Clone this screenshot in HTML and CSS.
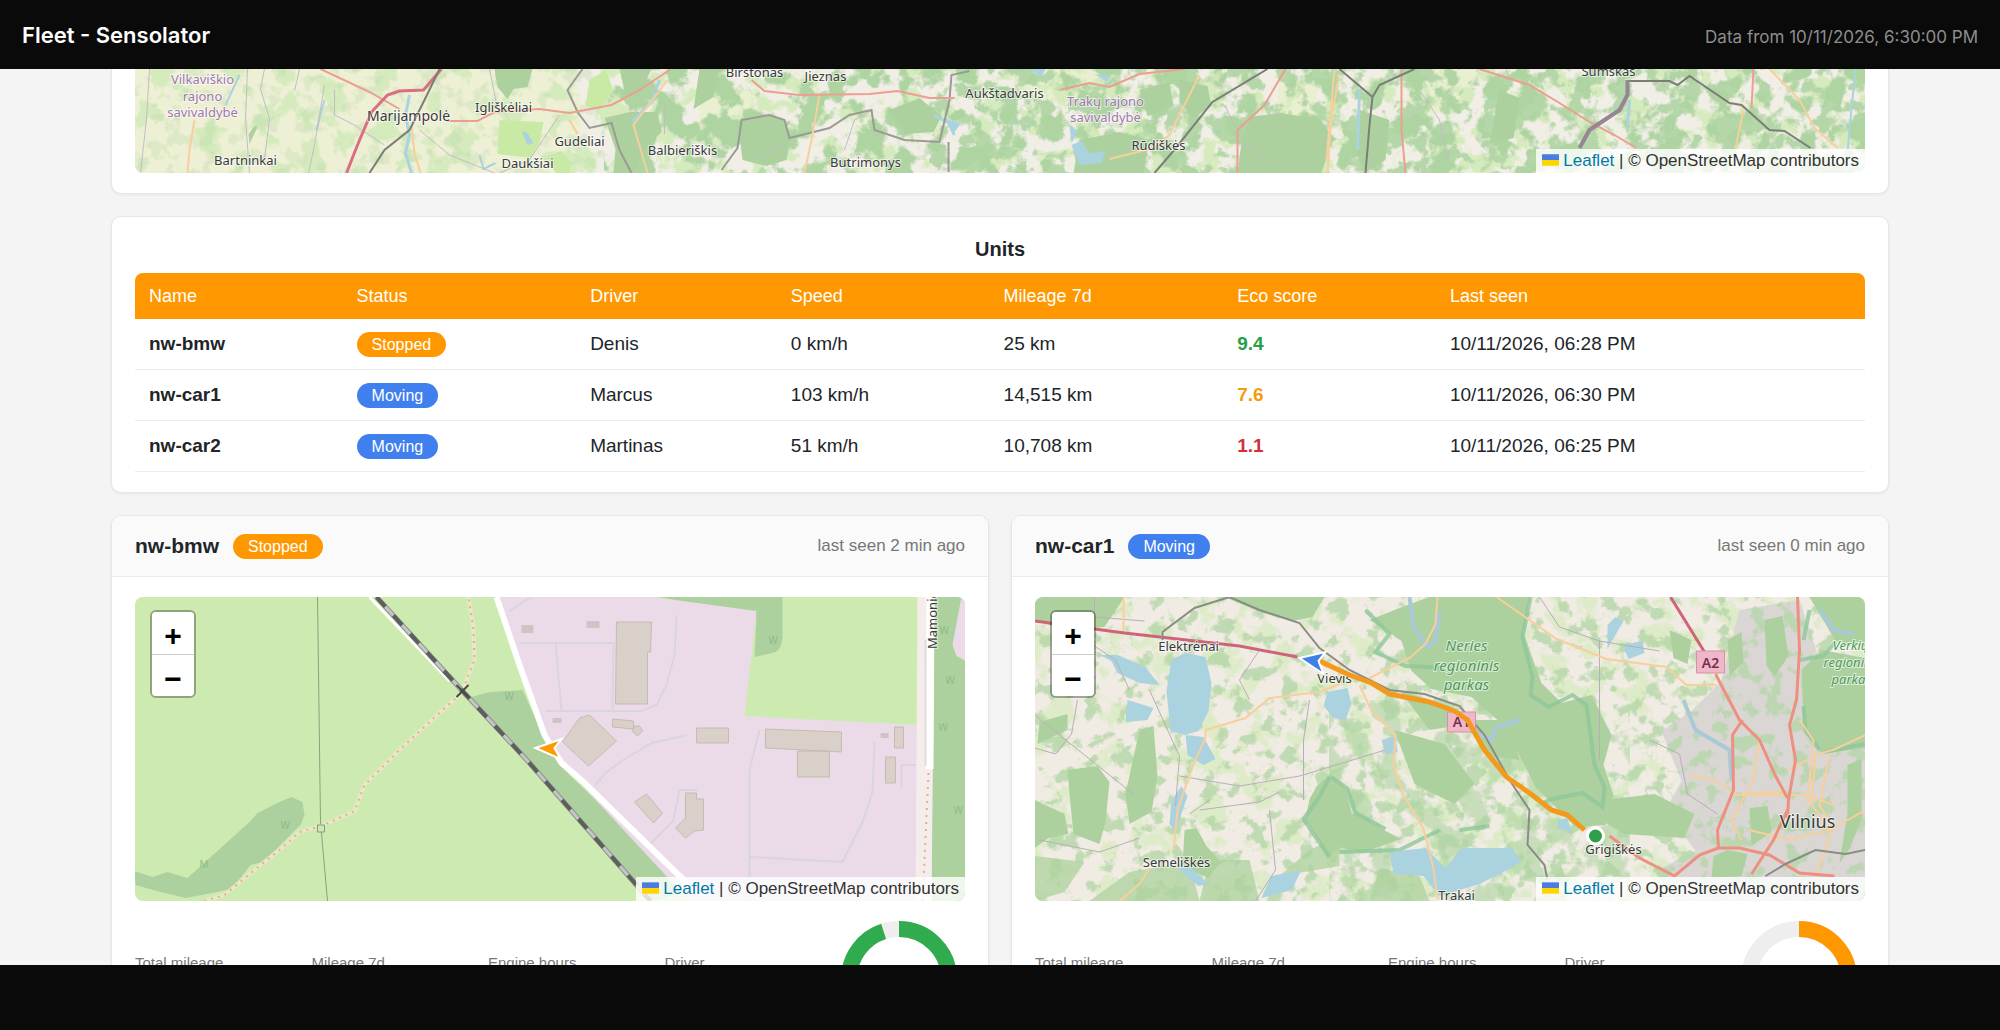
FILE: index.html
```html
<!DOCTYPE html>
<html lang="en">
<head>
<meta charset="utf-8">
<meta name="viewport" content="width=device-width, initial-scale=1">
<title>Fleet - Sensolator</title>
<link rel="stylesheet" href="styles.css">
</head>
<body>
<svg class="defs" width="0" height="0" aria-hidden="true">
  <defs>
    <filter id="woods" x="0" y="0" width="100%" height="100%" color-interpolation-filters="sRGB">
      <feTurbulence type="fractalNoise" baseFrequency=".035" numOctaves="5" seed="4"/>
      <feColorMatrix values="0 0 0 0 .68  0 0 0 0 .83  0 0 0 0 .63  10 0 0 0 -4.8"/>
    </filter>
    <filter id="groves" x="0" y="0" width="100%" height="100%" color-interpolation-filters="sRGB">
      <feTurbulence type="fractalNoise" baseFrequency=".06" numOctaves="5" seed="11"/>
      <feColorMatrix values="0 0 0 0 .71  0 0 0 0 .84  0 0 0 0 .66  9 0 0 0 -4.9"/>
    </filter>
    <filter id="meadow" x="0" y="0" width="100%" height="100%" color-interpolation-filters="sRGB">
      <feTurbulence type="fractalNoise" baseFrequency=".04" numOctaves="5" seed="21"/>
      <feColorMatrix values="0 0 0 0 .84  0 0 0 0 .92  0 0 0 0 .74  10 0 0 0 -5.2"/>
    </filter>
    <symbol id="flag" viewBox="0 0 12 8"><path fill="#4c7be1" d="M0 0h12v4H0z"/><path fill="#ffd500" d="M0 4h12v4H0z"/></symbol>
  </defs>
</svg>

<header class="topbar">
  <h1 class="topbar-title">Fleet - Sensolator</h1>
  <p class="topbar-time">Data from 10/11/2026, 6:30:00 PM</p>
</header>

<main class="content">
  <div class="stack">

    <section class="card overview">
      <div class="map map-overview">
        <svg class="map-art" viewBox="135 69 1731 104" preserveAspectRatio="xMidYMax slice" role="img" aria-label="Fleet overview map">
          <path fill="#f1eee6" d="M135 0h1731v180H135z"/>
          <path fill="#eef0d5" d="M135 0h445l-15 50 20 60-10 70H135z"/>
          <path fill="#e9efd0" d="M1420 69h60l-20 40-60 10zM1010 69h90v30h-80zM700 90h60l-20 40h-40zM1280 80h40l-10 50h-35z"/>
          <rect x="135" y="69" width="1731" height="104" filter="url(#meadow)"/>
          <rect x="135" y="69" width="470" height="104" filter="url(#groves)" opacity=".3"/>
          <rect x="605" y="69" width="1261" height="104" filter="url(#woods)"/>
          <rect x="930" y="69" width="936" height="104" filter="url(#groves)"/>
          <g fill="#add19e">
            <path d="M740 135l2-16 28-4 15 6 6 17-4 22-20 6-24-6zM1250 117l30-4 40 6 14 18-12 36h-84l4-30zM605 118l25-6 28 0 4 20-20 20-8 21h-20l2-24zM495 69h38l-5 18-14 2-6 10-10-12zM1180 80l28 6 4 20-18 12-14-16zM1080 140l40-8 30 8-6 33h-70zM620 69h32l-10 22-16 4zM1360 110l30 10-4 40-20 12-10-20zM1500 90l20 8-6 40-24 6zM258 127l-8 17-1-10 6-8z"/>
            <path d="M890 110l30-12 22 18-8 16-28 2zM700 69h20l-6 28-20 12zM1140 90l30-8 4 24-26 10z"/>
          </g>
          <path fill="#c8eaa4" d="M500 120l44 2-4 20-8 16-34-4zM548 156l14-5 10 12-2 10h-14zM590 80l16-10 8 20-14 20-14-4z"/>
          <g fill="none" stroke="#aad3df" stroke-width="3">
            <path d="M410 95l-4 20 4 20-4 18 6 20M935 115l14 8 6 12M660 80l-8 22-20 20M1360 90l-2 60M1630 100l-2 25"/>
            <path d="M1856 69l-4 40-6 64M480 155l4 14 12-6M240 75l-14 30M325 100l-8 30" stroke-width="2"/>
          </g>
          <path fill="#aad3df" d="M1072 145l10-4 8 12 16-2-4 12-22 2zM522 131l6 2 6 10-6 2zM1030 69h16l-4 8zM945 118l16 6-6 8zM1070 125l8 6-6 12zM1095 74l16 2-4 6z"/>
          <g fill="none" stroke="#c3bcc4" stroke-width="1">
            <path d="M150 69l-3 50-6 54M248 69l-2 50 4 54M265 69l-4 20 9 30-5 40M325 85l-10 60-6 28M335 90v25l20 10 30 20M420 130l30 25 45 18M490 69l8 40M640 69l25 35 0 30M760 160l30-20M845 150l10-30 18-10M560 115l-30 45-30 13M300 69l-5 22M1225 105l20 40 30 20M1420 90l20 30 8 40"/>
          </g>
          <path fill="none" stroke="#9a9b94" stroke-width="2" d="M583 69l-15 21 10 22 12 16 22-5 8 27 12 23M722 170l16-22 2-13 2-15 28-5 15 5 5 18 40-10 20-13 22-5 3 20 30 10 35 2 10-42 2-25 18-4M949 142v30"/>
          <g fill="none" stroke="#f7cf9c" stroke-width="2">
            <path d="M195 120l-5 30-2 23M820 95l-8 45-7 33M412 125l3 28 6 20M668 80l-34 45 14 48M1200 75l-30 60-20 14-40 10M1340 75l-8 40-4 58M1335 69l-8 90M1770 69l30 31 15 28 23 20M1744 110l-8 38M570 120l8 14"/>
          </g>
          <g fill="none" stroke="#ec9f90" stroke-width="2">
            <path d="M321 69l49 23 30 17M447 121h31l17-9 45-3 30 4 42-8 28-15 30-20M752 80l13 11 35 4 70-1 28-3 32 7h25M1060 90l30-7 20 4 30-13 45-5"/>
            <path d="M1286 69l-21 36-27 25v43M1402 69v61l4 43M1480 69l50 16 30 18 30 19 25 13 22 13M1754 69l-2 39"/>
          </g>
          <path fill="none" stroke="#dc6e82" stroke-width="3" d="M442 69l-18 21-24 1-12 4-16 17-14 33-11 28"/>
          <g fill="none" stroke="#7d7d78" stroke-width="2">
            <path d="M440 69l-15 31-15 30-25 20-15 23M1268 69l-55 33-40 50-18 21M1340 69l33 28 7-12 35-16M1373 97l-3 28-4 48M1628 81h42l8 4 12-9 40 27 12 2 28 25 15 1 26 17"/>
            <path d="M1628 80v15l-8 15-30 20-10 18" stroke="#948693" stroke-width="4"/>
          </g>
          <g class="place" text-anchor="middle">
            <text x="409" y="121" font-size="14">Marijampolė</text>
            <text x="504" y="112">Igliškėliai</text>
            <text x="580" y="146">Gudeliai</text>
            <text x="683" y="155">Balbieriškis</text>
            <text x="246" y="165">Bartninkai</text>
            <text x="528" y="168">Daukšiai</text>
            <text x="755" y="77">Birštonas</text>
            <text x="826" y="81">Jieznas</text>
            <text x="1005" y="98">Aukštadvaris</text>
            <text x="1159" y="150">Rūdiškės</text>
            <text x="866" y="167">Butrimonys</text>
            <text x="1609" y="76">Šumskas</text>
          </g>
          <g class="place district" text-anchor="middle">
            <text x="203" y="84">Vilkaviškio</text><text x="203" y="101">rajono</text><text x="203" y="117">savivaldybė</text>
            <text x="1106" y="106">Trakų rajono</text><text x="1106" y="122">savivaldybė</text>
          </g>
        </svg>
        <p class="credit"><svg class="flag" aria-hidden="true"><use href="#flag"/></svg> <a href="#leaflet">Leaflet</a> | © OpenStreetMap contributors</p>
      </div>
    </section>

    <section class="card units">
      <h2 class="units-title">Units</h2>
      <table class="unit-table">
        <colgroup><col class="c-name"><col class="c-status"><col class="c-driver"><col class="c-speed"><col class="c-mileage"><col class="c-eco"><col></colgroup>
        <thead>
          <tr><th scope="col">Name</th><th scope="col">Status</th><th scope="col">Driver</th><th scope="col">Speed</th><th scope="col">Mileage 7d</th><th scope="col">Eco score</th><th scope="col">Last seen</th></tr>
        </thead>
        <tbody>
          <tr><td class="strong">nw-bmw</td><td><span class="badge stopped">Stopped</span></td><td>Denis</td><td>0 km/h</td><td>25 km</td><td class="strong good">9.4</td><td>10/11/2026, 06:28 PM</td></tr>
          <tr><td class="strong">nw-car1</td><td><span class="badge moving">Moving</span></td><td>Marcus</td><td>103 km/h</td><td>14,515 km</td><td class="strong fair">7.6</td><td>10/11/2026, 06:30 PM</td></tr>
          <tr><td class="strong">nw-car2</td><td><span class="badge moving">Moving</span></td><td>Martinas</td><td>51 km/h</td><td>10,708 km</td><td class="strong poor">1.1</td><td>10/11/2026, 06:25 PM</td></tr>
        </tbody>
      </table>
    </section>

    <div class="unit-grid">
      <article class="card unit">
        <header class="unit-head">
          <h2 class="unit-name">nw-bmw</h2><span class="badge stopped">Stopped</span>
          <span class="unit-seen">last seen 2 min ago</span>
        </header>
        <div class="unit-body">
          <div class="map map-unit">
            <svg class="map-art" viewBox="135 597 831 304" preserveAspectRatio="xMidYMid slice" role="img" aria-label="Position of nw-bmw">
              <path fill="#cdebb0" d="M135 597h831v304H135z"/>
              <g fill="#add19e">
                <path d="M135 871l18 6 15-5 20 6 62-56 8-9 22-11 12-5 11 5 2 13-4 10-25 25-13 12-12 3-10 13-10 11-18 4-27 5-25-6-25-7z"/>
                <path d="M472 697l18-5 33-2 22 48 25 37 120 115-35 11-18-16-62-71-60-68z"/>
                <path d="M660 597h123v42q-2 13-10 14l-18 4 2-40z"/>
                <path d="M934 597h32v304h-34z"/>
              </g>
              <path fill="#ebdbe8" d="M498 597h155l104 14-12 105 173 9-2 176H690L562 763l-17-28-22-60zM962 597h4v64l-9-5-4-11z"/>
              <g fill="none" stroke="#d8d5df" stroke-width="2">
                <path d="M520 643h94l-1 66M556 643l6 68M546 711h96l15-6 10-20 8-30 2-40M596 785l10-12 16-12 30-18 36-8M760 730l-10 40v130M875 742l-2 50-10 30-20 40-92-5M902 765v23M902 765h25M650 845l24-25 6-30h18M510 611l22-14"/>
              </g>
              <path fill="#f5ecec" d="M918 597h17l-3 304h-16z"/>
              <path fill="none" stroke="#fff" stroke-width="8" d="M931 597l-1 172"/>
              <path fill="none" stroke="#e2d9df" stroke-width="2" d="M926 640v126"/>
              <g fill="#d9d0c9" stroke="#c6bab2" stroke-width="1">
                <path d="M617 622h35l-1 30h-3v52h-32zM580 718l10-3 27 26-28 25-26-24zM613 719l21 2v8l-21-2zM635 726h5l3 5-5 5-5-5zM697 728h32v15h-32zM766 729l76 3v20l-76-4zM798 751h32v26h-32zM895 727h9v21h-9zM886 757h10v26h-10zM635 802l12-8 16 19-9 10zM686 793h11v6h7v31l-9 1-9 7-10-10 10-10z"/>
                <path stroke="none" fill="#cfc3c4" d="M587 621h13v7h-13zM522 625h12v8h-12zM881 733h8v5h-8zM553 718h9v5h-9z"/>
              </g>
              <path fill="none" stroke="#8aa27e" stroke-width="1" d="M318 597l3 225 7 79"/>
              <path fill="none" stroke="#e6e8c6" stroke-width="4" d="M205 901l20-6 25-21 30-24 20-18 22-6 33-15 10-26 35-35 30-28 32-29 13-33-1-30-5-33"/>
              <path fill="none" stroke="#e9ac8c" stroke-width="2" stroke-dasharray="2 5" d="M205 901l20-6 25-21 30-24 20-18 22-6 33-15 10-26 35-35 30-28 32-29 13-33-1-30-5-33M929 773l-6 130"/>
              <path fill="#cdebb0" stroke="#8a9583" stroke-width="1" d="M318 825h7v7h-7z"/>
              <path fill="none" stroke="#fff" stroke-width="3" d="M370 597l80 84"/>
              <path fill="none" stroke="#8f938f" stroke-width="5" d="M377 597l86 94 67 72 107 122 14 16"/>
              <path fill="none" stroke="#c4c6c4" stroke-width="3" d="M377 597l86 94 67 72 107 122 14 16"/>
              <path fill="none" stroke="#5c5f5c" stroke-width="4" stroke-dasharray="13 12" d="M377 597l86 94 67 72 107 122 14 16"/>
              <path stroke="#454b45" stroke-width="2" d="M457 685l12 12M469 685l-12 12"/>
              <path fill="none" stroke="#fff" stroke-width="6" d="M497 597l23 68 25 70 17 28 23 20 92 90 22 20"/>
              <g class="tree-marks"><text x="281" y="829">W</text><text x="200" y="868">M</text><text x="505" y="700">W</text><text x="769" y="644">W</text><text x="940" y="634">W</text><text x="946" y="684">W</text><text x="939" y="731">W</text><text x="954" y="814">W</text></g>
              <text class="place" transform="rotate(-90 937 649)" x="937" y="649">Mamonič</text>
              <path fill="#f90" stroke="#fff" stroke-width="2" d="M536 748l26-9-7 9 6 11z"/>
            </svg>
            <div class="zoom"><button type="button" aria-label="Zoom in">+</button><button type="button" aria-label="Zoom out">−</button></div>
            <p class="credit"><svg class="flag" aria-hidden="true"><use href="#flag"/></svg> <a href="#leaflet">Leaflet</a> | © OpenStreetMap contributors</p>
          </div>
          <div class="stats">
            <dl class="stat-list"><dt>Total mileage</dt><dt>Mileage 7d</dt><dt>Engine hours</dt><dt>Driver</dt></dl>
            <svg class="donut" viewBox="0 0 116 116" role="img" aria-label="Eco score 9.4">
              <circle class="donut-track" cx="58" cy="58" r="50"/>
              <circle class="donut-value good-ring" cx="58" cy="58" r="50" pathLength="100" stroke-dasharray="95 5" transform="rotate(-90 58 58)"/>
            </svg>
          </div>
        </div>
      </article>

      <article class="card unit">
        <header class="unit-head">
          <h2 class="unit-name">nw-car1</h2><span class="badge moving">Moving</span>
          <span class="unit-seen">last seen 0 min ago</span>
        </header>
        <div class="unit-body">
          <div class="map map-unit">
            <svg class="map-art" viewBox="1035 597 831 304" preserveAspectRatio="xMidYMid slice" role="img" aria-label="Route of nw-car1">
              <path fill="#f0ebe3" d="M1035 597h831v304h-831z"/>
              <rect x="1035" y="597" width="831" height="304" filter="url(#meadow)" opacity=".7"/>
              <path fill="#d9d6d4" d="M1740 610l60-10 20 60-10 60 56 20v161h-190l-20-30 40-20-30-40 16-30-20-50 30-20 30-30z"/>
              <rect x="1035" y="597" width="831" height="304" filter="url(#groves)" opacity=".8"/>
              <rect x="1330" y="700" width="300" height="201" filter="url(#woods)" opacity=".6"/>
              <g fill="#add19e">
                <path d="M1225 597h100l-12 20-20 4-30-8zM1370 620l30-12 30-11h100l-6 36 18 50 20 20 30-8 20 40-8 30 10 30-8 30-30 2-40-40-30-60-34-30-40-8-20-18-10-30-14-10z"/>
                <path d="M1035 597h90l-20 30-40 4-30-12zM1140 730l14-4 4 50-6 36-22 12-4-30zM1068 770l30-4 12 16-4 40-6 22-26-10-4-40zM1318 785l12-10 16 14 6 24 30 16 20 10-40 14-22-6-10 10-24-38 4-20zM1185 830l12-2 10 18 14 16-12 16-26-12zM1035 800l30 14 4 20-20 4-14 10zM1040 722l28-8v16l-30 14z"/>
                <path d="M1605 800l50-6 40 20-10 24-60-4-24-14zM1470 720l40 0 10 40-30-4zM1395 730l50 14 30 40-20 20-40-20zM1400 690l50 16 6 20-26 4zM1802 670l20-20 44 8v90l-44 6-18-30zM1765 620l18-4 6 40-14 20-8-10zM1728 640l14-8 2 30-14 14zM1810 597h56v50l-30-6zM1670 630l22 10-4 24-14-6zM1848 765l14-6v60l-12 30-10 14 8-50zM1750 808l18-2 4 26-20 14zM1728 850l20 4-6 22-30 2 2-22z"/>
                <path d="M1130 872l60-10 10 39h-110zM1210 860l40 0 10 41h-60zM1310 850l30-14 0 30-60 10zM1380 868l40 8 10 25h-60zM1035 856l50 6-20 30-30 9z" opacity=".75"/>
              </g>
              <g fill="none" stroke="#8fc79b" stroke-width="4" opacity=".8">
                <path d="M1366 610l24 24-14 18 30 14 40 2M1531 597l-8 40 10 40-2 18 18 12 24-12 14 10 8 60 10 22-2 20-20-14-30 6-10 4M1330 777l-10 20-16 22 26 38M1332 777l16 12 8 24 30 16M1800 660l24-4 12-14M1820 750l-14-20-2-24M1460 830l30-4M1440 830l-40 20-60 2"/>
                <path d="M1804 640l6-30M1825 752l40-8"/>
              </g>
              <g fill="#aad3df">
                <path d="M1172 660l14-7 20 4 6 26-3 28-10 20-14 4-14-4-4-40zM1328 692l20-4 4 16-6 16-12-2-10-12zM1100 655l18 0 28 12 14 18-20-2-22-10-6-12zM1128 700l26 8-6 12-22 2zM1390 852l36-4 20 20 16-20 50 0 10 14-22 12-20 10-40 12-16-20-30-2zM1272 876l30-6-10 20-30 8zM1186 735l18 2 12 22-12 6-16-10zM1623 645l20-4 2 12-16 6zM1172 800l10-14 6 10-12 36-6-8zM1175 866l14 0 20 18-10 2zM1382 740l14-4 2 16-12 2zM1558 820l10-2 4 14-14-4zM1608 625l8-8 8 4-16 28z"/>
              </g>
              <path fill="none" stroke="#aac9d8" stroke-width="4" d="M1410 597l4 30 14 20 8-6 4-30M1520 720l-24 8-4 12-18-8M1820 610l14 20 20 4M1684 700l12 30 34 20 2 30"/>
              <path fill="none" stroke="#b7aeb8" stroke-width="1" d="M1095 597v20l50 4M1078 700l-6 34-16 20-21-6M1150 690l18 40 12 26-4 50M1180 776l60 10 60-10 20-6 66-20M1035 715l50 40 50 40M1200 810l60-8 20-10M1130 690l-14-30-30-20M1250 700l-10-20 20-30M1310 700l-6 40 0 60M1540 597l20 30 40 14 60 10M1600 640v120M1040 840l60 12 40-14M1210 800l-20 14M1270 810l6 60-20 31M1650 740l30 14 8 40 30 20"/>
              <g fill="none" stroke="#f8cf9b" stroke-width="2">
                <path d="M1124 597v34M1150 868l-10 16-20 17M1174 850l4-40 16-46 12-26 0-8 40-12 24-20 50-6 20-8v-20M1360 685l12 26 24 24-2 30 10 30 20 34 10 40 4 30M1370 678l40-20 16-14 10-20 2-27M1497 597l60 42 50 20 60 8 20 18 30 0M1690 775l26 6 20 14 50-4M1760 740l-6 40-22 40 10 20M1800 720l14 20-6 60 24 30-20 60M1866 735l-30 14-20 6-4 50M1830 755l-10 50 12 20M1788 770l20-10M1830 830l36-20M1735 795h70l30 10M1750 830l40 10 40-10"/>
              </g>
              <g fill="none" stroke="#ee9080" stroke-width="3">
                <path d="M1798 597l2 53-3 50-7 25 6 35-7 40-1 18M1743 720l-10 15 1 55-16 40 1 18 21 0 30 7 30 18 35 3M1719 848l-19 7-25 21-35-18-30-22M1788 810l-14 30-22 34M1716 674l24 46 20 20 16 36 12 22"/>
              </g>
              <path fill="none" stroke="#cf6478" stroke-width="3" d="M1671 597l34 55M1035 621l90 12 115 13 58 11"/>
              <path fill="none" stroke="#8b8d84" stroke-width="2" d="M1163 640v-8l32-24 35-11 30 13 40 13 20 25 30 22 40 20 35 4 35 12 25 29 25 45 20 30-2 35 17 20 3 15M1766 876l20-12 30-14 30 4 20-4"/>
              <path fill="#eeb8c8" stroke="#d990a8" d="M1448 712h28v20h-28zM1697 651h28v22h-28z"/>
              <g class="shield" text-anchor="middle"><text x="1462" y="727">A1</text><text x="1711" y="668">A2</text></g>
              <g class="place" text-anchor="middle">
                <text x="1189" y="651">Elektrėnai</text>
                <text x="1335" y="683">Vievis</text>
                <text x="1177" y="867">Semeliškės</text>
                <text x="1457" y="900">Trakai</text>
                <text x="1614" y="854">Grigiškės</text>
                <text x="1808" y="828" font-size="18">Vilnius</text>
              </g>
              <g class="place park" text-anchor="middle"><text x="1467" y="651">Neries</text><text x="1467" y="671">regioninis</text><text x="1467" y="690">parkas</text></g>
              <g class="place park-small"><text x="1833" y="650">Verkių</text><text x="1824" y="667">regioninis</text><text x="1832" y="684">parkas</text></g>
              <path fill="none" stroke="#f39a1c" stroke-width="5" stroke-linejoin="round" d="M1320 661l30 14 22 8 18 11 40 8 25 9 13 9 17 30 22 27 23 16 22 17 16 5 17 15"/>
              <circle cx="1596" cy="836" r="8" fill="#2e9e4a" stroke="#fff" stroke-width="3"/>
              <path fill="#3f7fe8" stroke="#fff" stroke-width="2" d="M1300 658l26-6-7 9 5 13z"/>
            </svg>
            <div class="zoom"><button type="button" aria-label="Zoom in">+</button><button type="button" aria-label="Zoom out">−</button></div>
            <p class="credit"><svg class="flag" aria-hidden="true"><use href="#flag"/></svg> <a href="#leaflet">Leaflet</a> | © OpenStreetMap contributors</p>
          </div>
          <div class="stats">
            <dl class="stat-list"><dt>Total mileage</dt><dt>Mileage 7d</dt><dt>Engine hours</dt><dt>Driver</dt></dl>
            <svg class="donut" viewBox="0 0 116 116" role="img" aria-label="Eco score 7.6">
              <circle class="donut-track" cx="58" cy="58" r="50"/>
              <circle class="donut-value fair-ring" cx="58" cy="58" r="50" pathLength="100" stroke-dasharray="76 24" transform="rotate(-90 58 58)"/>
            </svg>
          </div>
        </div>
      </article>
    </div>

  </div>
</main>

<footer class="bottombar"></footer>
</body>
</html>
```
FILE: styles.css
```css
* { box-sizing: border-box; }

body {
  margin: 0;
  height: 100vh;
  display: flex;
  flex-direction: column;
  background: #0a0a0a;
  color: #212529;
  font-family: "Liberation Sans", Arial, sans-serif;
}

h1, h2, p, dl { margin: 0; }

.defs { position: absolute; }

.topbar {
  flex: none;
  height: 69px;
  padding: 0 22px;
  display: flex;
  align-items: center;
  justify-content: space-between;
  font-family: Inter, sans-serif;
}
.topbar-title { font-size: 22px; font-weight: 600; color: #fff; }
.topbar-time { font-size: 17px; padding-top: 5px; color: #8e8e8e; }

.bottombar { flex: none; height: 65px; }

.content {
  flex: 1;
  min-height: 0;
  overflow: hidden;
  background: #f4f4f4;
}
.stack {
  max-width: 1778px;
  margin: 0 auto;
  display: flex;
  flex-direction: column;
  gap: 22px;
}

.card {
  background: #fff;
  border: 1px solid #e6e6e6;
  border-radius: 10px;
  box-shadow: 0 1px 3px rgba(0, 0, 0, .06);
}

.overview {
  padding: 0 23px 20px;
  border-top: 0;
  border-radius: 0 0 10px 10px;
}

.map {
  position: relative;
  overflow: hidden;
  border-radius: 8px;
}
.map-overview { height: 104px; border-radius: 0 0 8px 8px; }
.map-unit { height: 304px; }
.map-art { display: block; width: 100%; height: 100%; }

.place {
  font-family: "Noto Sans", sans-serif;
  font-size: 13px;
  fill: #3a3a3a;
  stroke: rgba(255, 255, 255, .6);
  stroke-width: 2px;
  paint-order: stroke;
}
.district { fill: #a177ae; }
.park { font-size: 15px; font-style: italic; fill: #4c9a58; }
.park-small { font-style: italic; fill: #4c9a58; }
.shield { font: 600 14px "Noto Sans", sans-serif; fill: #7c2c50; }
.tree-marks { font: 10px "Noto Sans", sans-serif; fill: #8fb98a; }

.credit {
  position: absolute;
  right: 0;
  bottom: 0;
  padding: 0 6px;
  background: rgba(255, 255, 255, .8);
  color: #333;
  font-size: 17px;
  line-height: 24px;
  white-space: nowrap;
}
.credit a { color: #0078a8; text-decoration: none; }
.flag { width: 17px; height: 12px; }

.zoom {
  position: absolute;
  left: 15px;
  top: 13px;
  width: 46px;
  border: 2px solid rgba(0, 0, 0, .3);
  border-radius: 6px;
  background-clip: padding-box;
  overflow: hidden;
}
.zoom button {
  display: block;
  width: 100%;
  height: 42px;
  padding: 6px 0 0;
  border: 0;
  background: #fff;
  color: #000;
  font: 700 30px/36px "Liberation Sans", Arial, sans-serif;
}
.zoom button + button { border-top: 1px solid #ccc; }

.units { padding: 20px 23px; }
.units-title {
  font-size: 20px;
  line-height: 24px;
  padding-bottom: 12px;
  text-align: center;
}

.unit-table {
  width: 100%;
  table-layout: fixed;
  border-collapse: separate;
  border-spacing: 0;
  font-size: 19px;
}
.c-name { width: 12%; }
.c-status { width: 13.5%; }
.c-driver { width: 11.6%; }
.c-speed { width: 12.3%; }
.c-mileage { width: 13.5%; }
.c-eco { width: 12.3%; }
.unit-table th {
  height: 46px;
  padding: 0 14px;
  background: #ff9800;
  color: #fff;
  font-size: 18px;
  font-weight: 400;
  text-align: left;
}
.unit-table th:first-child { border-top-left-radius: 8px; }
.unit-table th:last-child { border-top-right-radius: 8px; }
.unit-table td {
  height: 51px;
  padding: 0 14px;
  border-bottom: 1px solid #ececec;
}
.unit-table .strong { font-weight: 700; }
.good { color: #28a045; }
.fair { color: #f39c12; }
.poor { color: #d32f3a; }

.badge {
  display: inline-block;
  padding: 0 15px;
  border-radius: 13px;
  color: #fff;
  font-size: 16px;
  line-height: 25px;
  vertical-align: middle;
}
.stopped { background: #ff9800; }
.moving { background: #4080ee; }

.unit-grid {
  display: grid;
  grid-template-columns: 1fr 1fr;
  gap: 22px;
}
.unit { overflow: hidden; }
.unit-head {
  display: flex;
  align-items: center;
  gap: 14px;
  height: 61px;
  padding: 0 23px;
  background: #fafafa;
  border-bottom: 1px solid #ebebeb;
}
.unit-name { font-size: 21px; }
.unit-seen { margin-left: auto; color: #777; font-size: 17px; }
.unit-body { padding: 20px 23px; }

.stats {
  display: flex;
  justify-content: space-between;
  padding: 20px 8px 0 0;
}
.stat-list {
  flex: 1;
  display: grid;
  grid-template-columns: repeat(4, 1fr);
  padding-top: 32px;
  color: #777;
  font-size: 15px;
  line-height: 20px;
}
.donut { flex: none; width: 116px; height: 116px; }
.donut circle { fill: none; stroke-width: 16; }
.donut .donut-track { stroke: #eee; }
.donut .good-ring { stroke: #30ab4e; }
.donut .fair-ring { stroke: #ff9800; }
```
